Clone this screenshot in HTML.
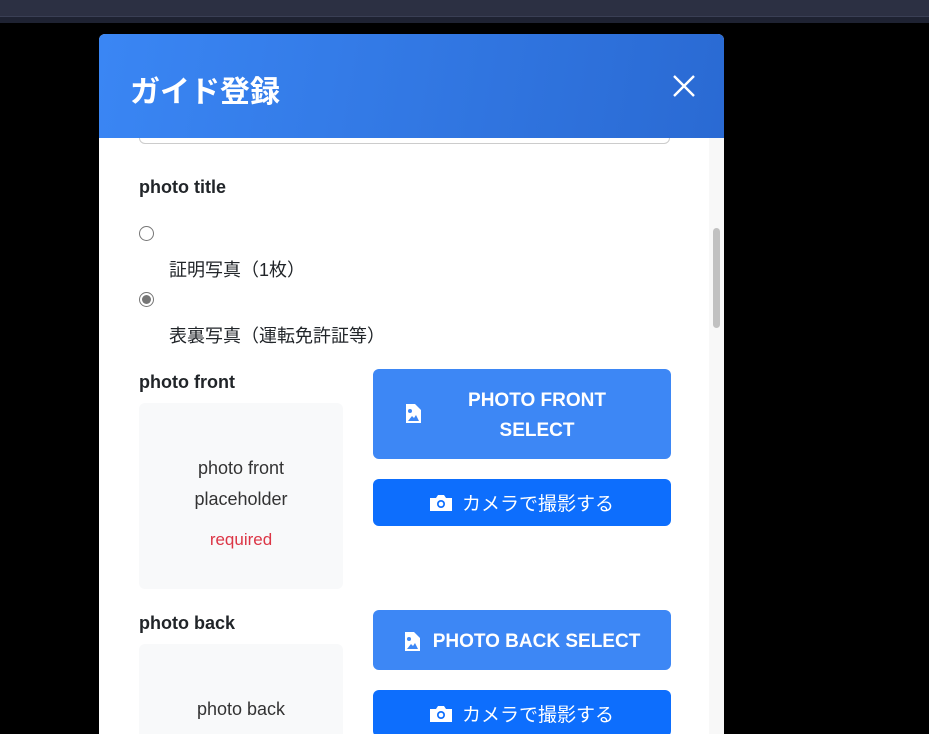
<!DOCTYPE html>
<html><head><meta charset="utf-8"><style>
*{box-sizing:border-box;margin:0;padding:0}
body{width:929px;height:724px;background:#000;position:relative;overflow:hidden;font-family:"Liberation Sans","Noto Sans CJK JP",sans-serif;color:#212529}
.top{position:absolute;left:0;top:0;width:929px;height:17px;background:#2c3043;border-bottom:1px solid #3a3f55}
.top2{position:absolute;left:0;top:17px;width:929px;height:6px;background:#1e2232}
.modal{position:absolute;left:99px;top:34px;width:625px;height:700px;background:#fff;border-radius:6px 6px 0 0;overflow:hidden}
.hdr{height:104px;background:linear-gradient(100deg,#3a86f4,#2a6ad3);position:absolute;left:0;top:0;width:625px;z-index:5}
.hdr h1{position:absolute;left:31px;top:33px;color:#fff;font-size:30px;font-weight:bold}
.x{position:absolute;left:573px;top:40px}
.sb{position:absolute;left:610px;top:104px;width:15px;height:600px;background:#f8f8f8}
.thumb{position:absolute;left:4px;top:90px;width:7px;height:100px;background:#c1c1c1;border-radius:4px}
.a{position:absolute}
.lbl{font-weight:bold;font-size:18px}
.radio{width:15px;height:15px;border:1px solid #767676;border-radius:50%;background:#fff}
.rt{font-size:18px}
.ph{background:#f8f9fa;border-radius:6px;width:204px;text-align:center;font-size:18px;color:#333}
.btn{color:#fff;border-radius:6px;font-weight:bold;font-size:19px;text-align:center;display:flex;align-items:center;justify-content:center}
</style></head><body>
<div class="top"></div><div class="top2"></div>
<div class="modal">
 <div class="hdr"><h1>ガイド登録</h1>
 <svg class="x" width="24" height="24" viewBox="0 0 24 24"><path d="M2 2L22 22M22 2L2 22" stroke="#fff" stroke-width="2.4"/></svg></div>
 <div class="a" style="left:40px;top:70px;width:531px;height:40px;border:1px solid #ccc;border-radius:6px"></div>
 <div class="sb"><div class="thumb"></div></div>
 <div class="a lbl" style="left:40px;top:143px">photo title</div>
 <div class="a radio" style="left:40px;top:192px"></div>
 <div class="a rt" style="left:70px;top:222px">証明写真（1枚）</div>
 <div class="a radio" style="left:40px;top:258px"><div style="margin:2px;width:9px;height:9px;border-radius:50%;background:#767676"></div></div>
 <div class="a rt" style="left:70px;top:288px">表裏写真（運転免許証等）</div>
 <div class="a lbl" style="left:40px;top:338px">photo front</div>
 <div class="a ph" style="left:40px;top:369px;height:186px;padding-top:50px;line-height:31px">photo front<br>placeholder<br><span style="color:#dc3545;font-size:17px;display:inline-block;margin-top:9px">required</span></div>
 <div class="a btn" style="left:274px;top:335px;width:298px;height:90px;background:#3d87f5;line-height:30px">
  <svg style="position:absolute;left:32px;top:35px" width="16" height="20" viewBox="0 0 16 20"><path d="M1 0H10L16 6V19H1Z" fill="#fff"/><circle cx="5" cy="7" r="2" fill="#3d87f5"/><path d="M3 17L7 12L9 14L11 11L14 17Z" fill="#3d87f5"/></svg>
  <span style="margin-left:30px;padding-top:3px">PHOTO FRONT<br>SELECT</span></div>
 <div class="a btn" style="left:274px;top:445px;width:298px;height:47px;background:#0d6efd;font-weight:normal">
  <svg width="22" height="16" viewBox="0 0 22 16" style="margin-right:10px"><path d="M0 3H6L8 0H14L16 3H22V16H0Z" fill="#fff"/><circle cx="11" cy="9" r="4" fill="#0d6efd"/><circle cx="11" cy="9" r="2.3" fill="#fff"/></svg>カメラで撮影する</div>
 <div class="a lbl" style="left:40px;top:579px">photo back</div>
 <div class="a ph" style="left:40px;top:610px;height:120px;padding-top:55px">photo back</div>
 <div class="a btn" style="left:274px;top:576px;width:298px;height:60px;background:#3d87f5;padding-top:3px">
  <svg width="16" height="20" viewBox="0 0 16 20" style="margin-right:13px"><path d="M1 0H10L16 6V19H1Z" fill="#fff"/><circle cx="5" cy="7" r="2" fill="#3d87f5"/><path d="M3 17L7 12L9 14L11 11L14 17Z" fill="#3d87f5"/></svg>PHOTO BACK SELECT</div>
 <div class="a btn" style="left:274px;top:656px;width:298px;height:47px;background:#0d6efd;font-weight:normal">
  <svg width="22" height="16" viewBox="0 0 22 16" style="margin-right:10px"><path d="M0 3H6L8 0H14L16 3H22V16H0Z" fill="#fff"/><circle cx="11" cy="9" r="4" fill="#0d6efd"/><circle cx="11" cy="9" r="2.3" fill="#fff"/></svg>カメラで撮影する</div>
</div>
</body></html>
